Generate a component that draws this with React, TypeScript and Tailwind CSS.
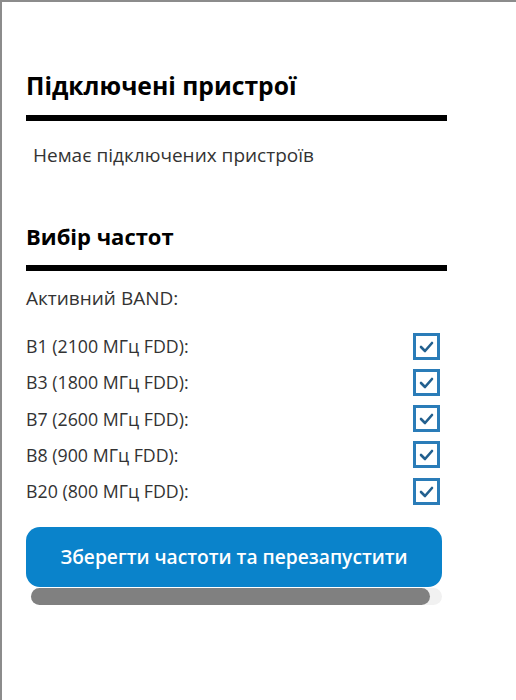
import React from "react";

const bands = [
  "B1 (2100 МГц FDD):",
  "B3 (1800 МГц FDD):",
  "B7 (2600 МГц FDD):",
  "B8 (900 МГц FDD):",
  "B20 (800 МГц FDD):",
];

function CheckBox() {
  return (
    <div className="flex h-[27px] w-[27px] items-center justify-center border-[3px] border-[#2a7cb8] bg-white">
      <svg width="17" height="17" viewBox="0 0 17 17" fill="none">
        <path d="M3 9 L7 13 L14 5" stroke="#22608f" strokeWidth="2.6" strokeLinecap="round" strokeLinejoin="round" />
      </svg>
    </div>
  );
}

export default function App() {
  return (
    <div
      className="h-[700px] w-[516px] overflow-hidden border-l-2 border-t-2 border-[#8c8c8c] bg-white text-[#333]"
      style={{ fontFamily: '"Open Sans", "Noto Sans", sans-serif' }}
    >
      <div className="flex flex-col pl-[24px] pt-[68px]">
        <h2 className="h-[32px] text-[24.7px] font-bold leading-[32px] text-black">Підключені пристрої</h2>
        <div className="mt-[13px] h-[6px] w-[421px] bg-black" />
        <p className="mt-[22px] h-[24px] pl-[7px] text-[19px] leading-[24px]">Немає підключених пристроїв</p>

        <h2 className="mt-[53px] h-[32px] text-[22px] font-bold leading-[32px] text-black">Вибір частот</h2>
        <div className="mt-[13px] h-[6px] w-[421px] bg-black" />
        <p className="mt-[15px] h-[24px] text-[19px] leading-[24px]">Активний BAND:</p>

        <div className="mt-[18px] flex w-[414px] flex-col">
          {bands.map((b) => (
            <div key={b} className="flex h-[36.25px] items-center justify-between">
              <span className="text-[17.8px] leading-[24px]">{b}</span>
              <CheckBox />
            </div>
          ))}
        </div>

        <button className="mt-[18px] flex h-[60px] w-[416px] items-center justify-center rounded-[14px] bg-[#0a83cb] text-[19.2px] font-semibold text-white">
          Зберегти частоти та перезапустити
        </button>
        <div className="ml-[5px] mt-px h-[17px] w-[411px] rounded-full bg-[#f1f1f1]">
          <div className="h-full w-[399px] rounded-full bg-[#808080]" />
        </div>
      </div>
    </div>
  );
}
